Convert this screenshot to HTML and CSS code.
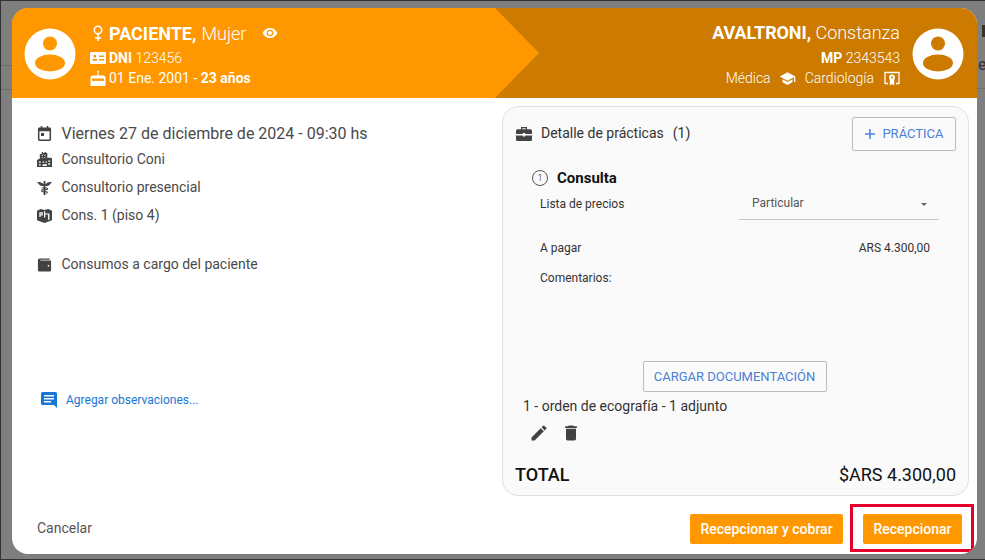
FILE: index.html
```html
<!DOCTYPE html>
<html lang="es">
<head>
<meta charset="utf-8">
<title>Recepcionar turno</title>
<link rel="stylesheet" href="styles.css">
</head>
<body>
<div class="screen">
  <div class="behind">
    <span class="behind-line line-a"></span>
    <span class="behind-line line-b"></span>
    <span class="behind-line line-c"></span>
    <span class="behind-mark"></span>
    <span class="behind-e">e</span>
  </div>
  <section class="dialog">
    <header class="head">
      <div class="head-left">
        <svg class="avatar" viewBox="0 0 52 52"><circle cx="26" cy="26" r="25.5" fill="#fff"/><circle cx="26" cy="15.5" r="7" fill="#ff9800"/><ellipse cx="26" cy="35" rx="15" ry="8.5" fill="#ff9800"/></svg>
        <div class="pat">
          <div class="pat-name">
            <svg class="i-sex" viewBox="0 0 12 18"><circle cx="6" cy="6" r="3.7" fill="none" stroke="#fff" stroke-width="1.6"/><path d="M6 10v7M3 14h6" stroke="#fff" stroke-width="1.6" fill="none"/></svg>
            <b>PACIENTE,</b><span class="thin name-gap">Mujer</span>
            <svg class="i-eye" viewBox="0 0 24 24"><path fill="#fff" d="M12 4.5C7 4.5 2.7 7.6 1 12c1.7 4.4 6 7.5 11 7.5s9.3-3.100 11-7.500c-1.700-4.400-6-7.500-11-7.500zM12 17a5 5 0 1 1 0-10 5 5 0 0 1 0 10zm0-8a3 3 0 1 0 0 6 3 3 0 0 0 0-6z"/></svg>
          </div>
          <div class="pat-row">
            <svg class="i-row" viewBox="0 0 16 16"><path fill="#fff" fill-rule="evenodd" d="M1.500 2h13A1.500 1.500 0 0 1 16 3.500v9a1.500 1.500 0 0 1-1.500 1.500h-13A1.500 1.500 0 0 1 0 12.500v-9A1.500 1.500 0 0 1 1.500 2zM3.500 5v2.600h2.500V5zM2.500 9v1.800h4.500V9zM9 5.500v1.400h5V5.500zM9 9v1.400h5V9z"/></svg>
            <span><b>DNI</b> 123456</span>
          </div>
          <div class="pat-row pat-birth">
            <svg class="i-row" viewBox="0 0 16 16"><path fill="#fff" d="M8 0l1 1.800a1 1 0 1 1-2 0zM7.300 3.500h1.400v2.500H7.300zM3 5.500h10A2.500 2.500 0 0 1 15.500 8v8H.5V8A2.500 2.500 0 0 1 3 5.500z"/><path fill="#ff9800" d="M2 8.500h12v2c-.9.800-2.100.800-3 0-.9.800-2.100.800-3 0-.9.800-2.100.800-3 0-.9.800-2.100.800-3 0z"/></svg>
            <span>01 Ene. 2001 - <b>23 años</b></span>
          </div>
        </div>
        <svg class="arrow" viewBox="0 0 44 90" preserveAspectRatio="none"><path d="M0 0L44 45L0 90z" fill="#ff9800"/></svg>
      </div>
      <div class="head-right">
        <div class="doc">
          <div class="doc-name"><b>AVALTRONI,</b> <span class="thin">Constanza</span></div>
          <div class="doc-row"><b>MP</b> 2343543</div>
          <div class="doc-row doc-spec">
            <span>Médica</span>
            <svg class="i-cap" viewBox="0 0 24 24"><path fill="#fff" d="M12 3L1 9l11 6 9-4.900V17h2V9zM5 13.200v4L12 21l7-3.800v-4L12 17z"/></svg>
            <span>Cardiología</span>
            <svg class="i-cert" viewBox="0 0 16 16"><path fill="none" stroke="#fff" stroke-width="1.300" d="M4 13.500H1V2.500h14v11h-3"/><path fill="#fff" d="M5.800 9.500h4.400v6L8 14l-2.200 1.500z"/><circle cx="8" cy="7.500" r="2.900" fill="#fff"/><circle cx="8" cy="7.500" r="1.100" fill="#cc7a00"/></svg>
          </div>
        </div>
        <svg class="avatar" viewBox="0 0 52 52"><circle cx="26" cy="26" r="25.500" fill="#fff"/><circle cx="26" cy="15.500" r="7" fill="#cc7a00"/><ellipse cx="26" cy="35" rx="15" ry="8.500" fill="#cc7a00"/></svg>
      </div>
    </header>

    <div class="body">
      <div class="info">
        <div class="info-row info-date">
          <svg class="i-info" viewBox="0 0 16 16"><path fill="#424242" fill-rule="evenodd" d="M4 0h1.600v1.600h4.800V0H12v1.600h1.500A1.500 1.500 0 0 1 15 3.100v11.400a1.500 1.500 0 0 1-1.500 1.500h-11A1.500 1.500 0 0 1 1 14.500V3.100a1.500 1.500 0 0 1 1.500-1.500H4zM2.600 5.500v8.900h10.800V5.500zM4.300 7.500h3.200v3.200H4.300z"/></svg>
          <span>Viernes 27 de diciembre de 2024 - 09:30 hs</span>
        </div>
        <div class="info-row">
          <svg class="i-info" viewBox="0 0 16 16"><path fill="#424242" fill-rule="evenodd" d="M5 0h1.500v1H8V0h1.500v1H11v5h3.500A1.500 1.500 0 0 1 16 7.500V16H0V8.500L3 7V2h2zM5 3v1h1.300V3zM7.700 3v1H9V3zM5 5.500v1h1.300v-1zM7.700 5.500v1H9v-1zM2 10v1.500h2V10zM2 13v1.500h2V13zM6 10v1.500h1.500V10zM9 10v1.500h1.500V10zM12 9v1.500h2V9zM12 12v1.500h2V12zM6 13v2h4.500v-2z"/></svg>
          <span>Consultorio Coni</span>
        </div>
        <div class="info-row">
          <svg class="i-info" viewBox="0 0 16 16"><path fill="#424242" d="M0 2.500C2.500 1.800 5 2.500 7 4.500V1h2v3.500c2-2 4.500-2.700 7-2-1.200.8-2 2.500-3 3.200-1.500.9-3 .6-4 .3V16H7V6c-1 .3-2.500.6-4-.3C2 5 1.200 3.300 0 2.500z"/><path fill="none" stroke="#424242" stroke-width="1.100" d="M5 8.500h5.500c1 0 1 2-.5 2H6c-1.500 0-1.500 2 0 2h4c1.200 0 1.200 1.500 0 1.500"/></svg>
          <span>Consultorio presencial</span>
        </div>
        <div class="info-row">
          <svg class="i-info" viewBox="0 0 16 16"><path fill="#424242" fill-rule="evenodd" d="M0 3l4-2 4 1 4-1 4 2v10l-8 3-8-3zM2.500 4.500v5h1.300V8h2.400V4.500zM3.800 5.700h1.100V6.800H3.800zM7.500 3.500V10h1.300V7h3v5.500h1.500V5.800H8.800V3.500z"/></svg>
          <span>Cons. 1 (piso 4)</span>
        </div>
        <div class="info-row info-pay">
          <svg class="i-info" viewBox="0 0 16 16"><path fill="#424242" fill-rule="evenodd" d="M3 1.500h10.500V3H3.500v.8H15V14a1.500 1.500 0 0 1-1.500 1.500h-11A1.500 1.500 0 0 1 1 14V3.500a2 2 0 0 1 2-2zM11.500 8.500v1.500H13V8.500z"/></svg>
          <span>Consumos a cargo del paciente</span>
        </div>
        <a class="observ">
          <svg class="i-obs" viewBox="0 0 16 16"><path fill="#1976d2" fill-rule="evenodd" d="M1.500 0h13A1.500 1.500 0 0 1 16 1.500V16l-3-3H1.500A1.500 1.500 0 0 1 0 11.500v-10A1.500 1.500 0 0 1 1.500 0zM3 3v1.500h10V3zM3 6v1.500h10V6zM3 9v1.500h7V9z"/></svg>
          <span>Agregar observaciones...</span>
        </a>
      </div>

      <div class="panel">
        <div class="panel-head">
          <svg class="i-brief" viewBox="0 0 16 14"><path fill="#424242" d="M5 0h6v2.200h3.500A1.500 1.500 0 0 1 16 3.700V7H9.200V6H6.800v1H0V3.700a1.500 1.500 0 0 1 1.500-1.500H5zM6.300 1.200v1h3.400v-1zM0 8.500h6.800v1h2.400v-1H16v4A1.500 1.500 0 0 1 14.500 14h-13A1.500 1.500 0 0 1 0 12.500z"/></svg>
          <span class="panel-title">Detalle de prácticas</span>
          <span class="panel-count">(1)</span>
          <button class="btn-out btn-add"><svg class="i-plus" viewBox="0 0 12 12"><path d="M6 1v10M1 6h10" stroke="#4a7fd6" stroke-width="1.500"/></svg>PRÁCTICA</button>
        </div>
        <div class="practice">
          <div class="prac-title"><span class="circ">1</span><b>Consulta</b></div>
          <div class="prac-row prac-list">
            <span class="prac-label">Lista de precios</span>
            <div class="select"><span>Particular</span><i class="caret"></i></div>
          </div>
          <div class="prac-row prac-pay"><span>A pagar</span><span>ARS 4.300,00</span></div>
          <div class="prac-com">Comentarios:</div>
        </div>
        <div class="docs">
          <button class="btn-out btn-doc">CARGAR DOCUMENTACIÓN</button>
        </div>
        <div class="attach">1 - orden de ecografía - 1 adjunto</div>
        <div class="tools">
          <svg class="i-tool" viewBox="0 0 24 24"><path fill="#424242" d="M3 17.250V21h3.750L17.810 9.940l-3.750-3.750zM20.710 7.040a1 1 0 0 0 0-1.410l-2.340-2.340a1 1 0 0 0-1.410 0l-1.830 1.830 3.750 3.750z"/></svg>
          <svg class="i-tool" viewBox="0 0 24 24"><path fill="#424242" d="M6 19c0 1.100.9 2 2 2h8c1.100 0 2-.9 2-2V7H6zM19 4h-3.500l-1-1h-5l-1 1H5v2h14z"/></svg>
        </div>
        <div class="total"><b>TOTAL</b><span>$ARS 4.300,00</span></div>
      </div>
    </div>

    <footer class="foot">
      <span class="cancel">Cancelar</span>
      <div class="actions">
        <button class="btn-main btn-first">Recepcionar y cobrar</button>
        <div class="mark"><button class="btn-main btn-last">Recepcionar</button></div>
      </div>
    </footer>
  </section>
</div>
</body>
</html>
```
FILE: styles.css
```css
* { box-sizing: border-box; }
html, body { margin: 0; padding: 0; }
body { width: 985px; height: 560px; overflow: hidden; font-family: Roboto, "Liberation Sans", sans-serif; }
svg { display: block; flex: none; }
b { font-weight: 700; }

.screen { position: relative; width: 985px; height: 560px; background: #7f7f7f; border: 1px solid #333; border-right: 0; padding: 7px 0 0 11px; }
.behind { position: absolute; inset: 0; }
.behind-line { position: absolute; height: 1px; background: #6e6e6e; }
.line-a { left: 0; width: 11px; top: 64px; }
.line-b { left: 0; width: 11px; top: 88px; }
.line-c { left: 976px; width: 8px; top: 87px; }
.behind-mark { position: absolute; left: 981px; top: 24px; width: 3px; height: 12px; background: #333; }
.behind-e { position: absolute; left: 977px; top: 54px; font-size: 16px; color: #333; }

.dialog { position: relative; width: 965px; height: 546px; background: #fff; border-radius: 16px; overflow: hidden; display: flex; flex-direction: column; }

.head { height: 90px; display: flex; background: #cc7a00; color: #fff; flex: none; }
.head-left { position: relative; width: 483px; background: #ff9800; display: flex; padding: 20px 0 0 12px; }
.arrow { position: absolute; left: 483px; top: 0; width: 44px; height: 90px; }
.avatar { width: 52px; height: 52px; }
.thin { font-weight: 300; }
.name-gap { margin-left: 5px; }

.pat { margin-left: 14px; margin-top: -7px; }
.pat-name { display: flex; align-items: center; height: 24px; margin-bottom: 3px; font-size: 18px; }
.i-sex { width: 12px; height: 18px; margin: 0 5px 0 2px; }
.i-eye { width: 16px; height: 16px; margin-left: 16px; }
.pat-row { display: flex; align-items: center; gap: 3px; height: 20px; font-size: 14px; font-weight: 300; }
.pat-birth { font-weight: 400; }
.i-row { width: 16px; height: 16px; }

.head-right { flex: 1; display: flex; justify-content: flex-end; padding: 20px 13px 0 0; }
.doc { text-align: right; margin-right: 12px; margin-top: -7px; }
.doc-name { font-size: 18px; height: 24px; line-height: 24px; margin-bottom: 3px; white-space: pre; }
.doc-name b { letter-spacing: -.1px; }
.doc-row { font-size: 14px; font-weight: 300; height: 20px; line-height: 20px; }
.doc-spec { display: flex; align-items: center; justify-content: flex-end; }
.i-cap { width: 17px; height: 17px; margin: 0 9px 0 8px; }
.i-cert { width: 16px; height: 16px; margin-left: 10px; }

.body { flex: none; height: 398px; display: flex; padding: 8px 8px 0 0; }
.info { width: 490px; flex: none; padding: 15px 0 0 25px; display: flex; flex-direction: column; color: #4a4a4a; }
.info-row { flex: none; display: flex; align-items: center; gap: 9.5px; height: 28px; font-size: 14px; }
.info-date { font-size: 16px; height: 24px; }
.info-pay { margin-top: 21px; }
.i-info { width: 15px; height: 15px; }
.observ { display: flex; align-items: center; gap: 9px; margin: 114px 0 0 4px; font-size: 12px; color: #1976d2; }
.i-obs { width: 16px; height: 16px; }

.panel { width: 467px; height: 390px; border: 1px solid #e0e0e0; border-radius: 16px; background: #fafafa; padding: 10px 12px 0; display: flex; flex-direction: column; color: #212121; }
.panel-head { display: flex; align-items: center; height: 34px; font-size: 14px; color: #333; }
.i-brief { width: 16px; height: 14px; margin-left: 1px; }
.panel-title { margin-left: 9px; padding-bottom: 2px; }
.panel-count { margin-left: 9px; padding-bottom: 2px; }
.btn-out { background: #fafafa; border: 1px solid #bdbdbd; border-radius: 2px; color: #4a7fd6; font: 400 13px Roboto, sans-serif; cursor: pointer; display: flex; align-items: center; justify-content: center; }
.btn-add { margin-left: auto; width: 104px; height: 34px; gap: 6px; padding-bottom: 2px; }
.i-plus { width: 12px; height: 12px; }

.practice { padding: 0 17px; }
.prac-title { display: flex; align-items: center; gap: 9px; margin-top: 17px; height: 20px; font-size: 15px; color: #111; }
.circ { width: 16px; height: 16px; border: 1px solid #555; border-radius: 50%; font-size: 9px; display: flex; align-items: center; justify-content: center; font-weight: 300; }
.prac-row { display: flex; justify-content: space-between; font-size: 12px; padding-left: 8px; color: #333; }
.prac-list { margin-top: 3px; align-items: flex-start; }
.prac-label { padding-top: 6px; }
.select { width: 200px; height: 29px; border-bottom: 1px solid #c4c4c4; display: flex; justify-content: space-between; padding: 5px 12px 0 13px; font-size: 12px; color: #555; }
.caret { width: 0; height: 0; margin-top: 7px; border: 3px solid transparent; border-top-color: #666; border-bottom: 0; }
.prac-pay { margin-top: 21px; padding-right: 9px; }
.prac-com { margin-top: 16px; padding-left: 8px; font-size: 12px; color: #333; }

.docs { display: flex; justify-content: center; margin-top: 76px; padding-right: 2px; }
.btn-doc { width: 184px; height: 31px; }
.attach { margin: 6px 0 0 8px; font-size: 14px; color: #333; }
.tools { display: flex; gap: 12px; margin: 9px 0 0 14px; }
.i-tool { width: 20px; height: 20px; }
.total { display: flex; justify-content: space-between; align-items: center; margin-top: 21px; font-size: 18px; color: #111; }
.total b { font-weight: 500; }

.foot { flex: 1; display: flex; justify-content: space-between; padding: 8px 15px 0 25px; align-items: center; }
.cancel { font-size: 14px; color: #555; margin-top: -2px; }
.actions { display: flex; align-items: center; gap: 20px; }
.btn-main { display: block; background: #ff9800; color: #fff; border: 0; border-radius: 2px; height: 30px; padding: 0 10px; font: 500 14px Roboto, sans-serif; }
.btn-first { min-width: 153px; }
.btn-last { min-width: 99px; }
.mark { position: relative; }
.mark::after { content: ""; position: absolute; inset: -10px -12px -8px -13px; border: 3px solid #e4002b; pointer-events: none; }
```
